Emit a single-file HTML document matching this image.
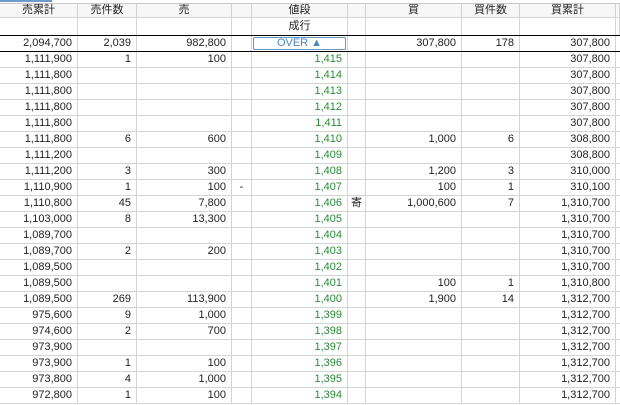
<!DOCTYPE html>
<html><head><meta charset="utf-8"><style>
body{margin:0;width:620px;height:405px;overflow:hidden;background:#fff;font-family:"Liberation Sans","Noto Sans CJK JP",sans-serif;font-size:11px;color:#222}
.r{position:absolute;left:0;width:620px;display:grid;grid-template-columns:78px 59px 95px 20px 96px 18px 96px 58px 96px 4px;box-sizing:border-box;border-bottom:1px solid #d4d4d4}
.r>div{border-right:1px solid #d4d4d4;text-align:right;padding-right:5px;white-space:nowrap;overflow:hidden;box-sizing:border-box}
.r>div:nth-child(4),.r>div:nth-child(6){text-align:center;padding:0}
.r>div:nth-child(5){color:#2a8a3a;padding-right:5px}
.h>div{text-align:center!important;padding:0!important;color:#222!important}
.bl{position:absolute;left:0;width:620px;height:1px;background:#000}
</style></head><body>
<div style="position:absolute;left:0;top:0;width:52px;height:2px;background:#6a9cc8"></div>
<div style="position:absolute;left:0;top:3px;width:620px;height:1px;background:#c8c8c8"></div>
<div class="r h" style="top:4px;height:14px;line-height:13px;background:#f7f7f7"><div>売累計</div><div>売件数</div><div>売</div><div></div><div>値段</div><div></div><div>買</div><div>買件数</div><div>買累計</div><div></div></div>
<div class="r h" style="top:18px;height:17px;line-height:16px;border-bottom:none"><div></div><div></div><div></div><div></div><div>成行</div><div></div><div></div><div></div><div></div><div></div></div>
<div class="bl" style="top:35px"></div>
<div class="r" style="top:36px;height:15px;line-height:15px;border-bottom:none"><div>2,094,700</div><div>2,039</div><div>982,800</div><div></div><div style="padding:1px 1px 0 1px"><div style="border:1px solid #6a96bc;border-radius:2px;height:11px;line-height:11px;text-align:center;color:#4a86c0">OVER ▲</div></div><div></div><div>307,800</div><div>178</div><div>307,800</div><div></div></div>
<div class="bl" style="top:51px"></div>
<div id="rows"></div>
<script>
var d=[
["1,111,900","1","100","","1,415","","","","307,800"],
["1,111,800","","","","1,414","","","","307,800"],
["1,111,800","","","","1,413","","","","307,800"],
["1,111,800","","","","1,412","","","","307,800"],
["1,111,800","","","","1,411","","","","307,800"],
["1,111,800","6","600","","1,410","","1,000","6","308,800"],
["1,111,200","","","","1,409","","","","308,800"],
["1,111,200","3","300","","1,408","","1,200","3","310,000"],
["1,110,900","1","100","-","1,407","","100","1","310,100"],
["1,110,800","45","7,800","","1,406","寄","1,000,600","7","1,310,700"],
["1,103,000","8","13,300","","1,405","","","","1,310,700"],
["1,089,700","","","","1,404","","","","1,310,700"],
["1,089,700","2","200","","1,403","","","","1,310,700"],
["1,089,500","","","","1,402","","","","1,310,700"],
["1,089,500","","","","1,401","","100","1","1,310,800"],
["1,089,500","269","113,900","","1,400","","1,900","14","1,312,700"],
["975,600","9","1,000","","1,399","","","","1,312,700"],
["974,600","2","700","","1,398","","","","1,312,700"],
["973,900","","","","1,397","","","","1,312,700"],
["973,900","1","100","","1,396","","","","1,312,700"],
["973,800","4","1,000","","1,395","","","","1,312,700"],
["972,800","1","100","","1,394","","","","1,312,700"]];
var h="";
d.forEach(function(r,i){var t=52+i*16;h+='<div class="r" style="top:'+t+'px;height:16px;line-height:15px">';r.forEach(function(c){h+='<div>'+c+'</div>'});h+='<div></div></div>';});
document.getElementById("rows").innerHTML=h;
</script>
</body></html>
